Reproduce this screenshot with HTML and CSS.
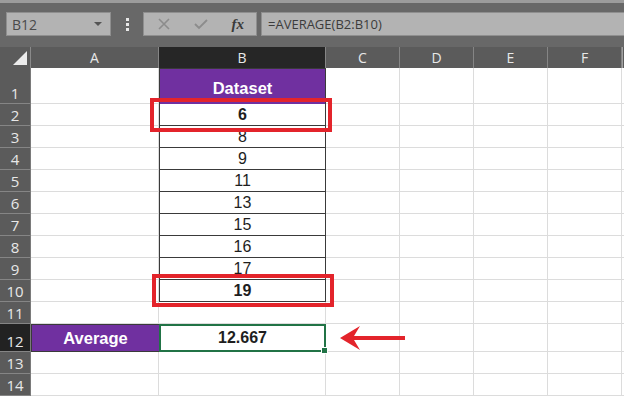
FILE: index.html
```html
<!DOCTYPE html>
<html lang="en">
<head>
    <meta charset="UTF-8">
    <title>Average - Excel</title>
    <link rel="stylesheet" href="styles.css">
</head>
<body>
    <div class="toolbar">
        <div class="namebox">
            <span>B12</span>
            <span class="caret"></span>
        </div>
        <div class="dots"><i></i><i></i><i></i></div>
        <div class="fbtns">
            <svg width="14" height="14" viewBox="0 0 14 14"><path d="M2 2 L12 12 M12 2 L2 12" stroke="#8c8c8c" stroke-width="1.6" fill="none"/></svg>
            <svg width="16" height="14" viewBox="0 0 16 14"><path d="M2 7 L6 11 L14 3" stroke="#8c8c8c" stroke-width="1.8" fill="none"/></svg>
            <span class="fx">fx</span>
        </div>
        <div class="formula">=AVERAGE(B2:B10)</div>
    </div>

    <div class="sheet">
        <div class="grid">
            <div class="corner"><span class="tri"></span></div>
            <div class="ch">A</div>
            <div class="ch sel">B</div>
            <div class="ch">C</div>
            <div class="ch">D</div>
            <div class="ch">E</div>
            <div class="ch">F</div>
            <div class="ch end"></div>

            <div class="rh">1</div><div class="c"></div><div class="c head">Dataset</div><div class="c"></div><div class="c"></div><div class="c"></div><div class="c"></div><div class="c end"></div>
            <div class="rh">2</div><div class="c"></div><div class="c data bold">6</div><div class="c"></div><div class="c"></div><div class="c"></div><div class="c"></div><div class="c end"></div>
            <div class="rh">3</div><div class="c"></div><div class="c data">8</div><div class="c"></div><div class="c"></div><div class="c"></div><div class="c"></div><div class="c end"></div>
            <div class="rh">4</div><div class="c"></div><div class="c data">9</div><div class="c"></div><div class="c"></div><div class="c"></div><div class="c"></div><div class="c end"></div>
            <div class="rh">5</div><div class="c"></div><div class="c data">11</div><div class="c"></div><div class="c"></div><div class="c"></div><div class="c"></div><div class="c end"></div>
            <div class="rh">6</div><div class="c"></div><div class="c data">13</div><div class="c"></div><div class="c"></div><div class="c"></div><div class="c"></div><div class="c end"></div>
            <div class="rh">7</div><div class="c"></div><div class="c data">15</div><div class="c"></div><div class="c"></div><div class="c"></div><div class="c"></div><div class="c end"></div>
            <div class="rh">8</div><div class="c"></div><div class="c data">16</div><div class="c"></div><div class="c"></div><div class="c"></div><div class="c"></div><div class="c end"></div>
            <div class="rh">9</div><div class="c"></div><div class="c data">17</div><div class="c"></div><div class="c"></div><div class="c"></div><div class="c"></div><div class="c end"></div>
            <div class="rh">10</div><div class="c"></div><div class="c data bold">19</div><div class="c"></div><div class="c"></div><div class="c"></div><div class="c"></div><div class="c end"></div>
            <div class="rh">11</div><div class="c"></div><div class="c"></div><div class="c"></div><div class="c"></div><div class="c"></div><div class="c"></div><div class="c end"></div>
            <div class="rh sel">12</div><div class="c label">Average</div><div class="c active bold">12.667<span class="handle"></span></div><div class="c"></div><div class="c"></div><div class="c"></div><div class="c"></div><div class="c end"></div>
            <div class="rh">13</div><div class="c"></div><div class="c"></div><div class="c"></div><div class="c"></div><div class="c"></div><div class="c"></div><div class="c end"></div>
            <div class="rh">14</div><div class="c"></div><div class="c"></div><div class="c"></div><div class="c"></div><div class="c"></div><div class="c"></div><div class="c end"></div>
        </div>

        <div class="mark mark-top"></div>
        <div class="mark mark-bottom"></div>
        <svg class="arrow" width="70" height="28" viewBox="0 0 70 28">
            <path d="M2 14 L22 2 L16 12 L67 12 L67 16 L16 16 L22 26 Z" fill="#e3242b"/>
        </svg>
    </div>
</body>
</html>
```

FILE: styles.css
```css
body {
    margin: 0;
    background: #5e5e5e;
    font-family: "Open Sans", "Noto Sans", sans-serif;
    overflow: hidden;
}
.toolbar {
    height: 47px;
    box-sizing: border-box;
    padding: 9px 0 0 6px;
    display: flex;
    align-items: flex-start;
    background: #686868;
    border-top: 3px solid #9c9c9c;
}
.namebox {
    width: 105px;
    height: 24px;
    box-sizing: border-box;
    background: #b3b3b3;
    border: 1px solid #8f8f8f;
    display: flex;
    align-items: center;
    justify-content: space-between;
    padding: 0 8px 0 5px;
    font-size: 14px;
    color: #4a4a4a;
}
.caret {
    width: 0;
    height: 0;
    border-left: 4px solid transparent;
    border-right: 4px solid transparent;
    border-top: 4px solid #555;
}
.dots {
    width: 32px;
    height: 24px;
    display: flex;
    flex-direction: column;
    align-items: center;
    justify-content: center;
    gap: 2px;
}
.dots i {
    width: 3px;
    height: 3px;
    background: #e8e8e8;
}
.fbtns {
    width: 114px;
    height: 24px;
    box-sizing: border-box;
    background: #b3b3b3;
    border: 1px solid #8f8f8f;
    display: flex;
    align-items: center;
    padding: 0 12px 0 13px;
    justify-content: space-between;
}
.fx {
    font-family: "Liberation Serif", serif;
    font-style: italic;
    font-weight: bold;
    font-size: 15px;
    color: #3a3a3a;
}
.formula {
    flex: 1;
    margin-left: 4px;
    height: 24px;
    box-sizing: border-box;
    background: #b3b3b3;
    border: 1px solid #8f8f8f;
    border-right: none;
    padding-left: 6px;
    font-size: 13px;
    line-height: 22px;
    color: #3c3c3c;
}
.sheet {
    position: relative;
}
.grid {
    display: grid;
    grid-template-columns: 31px 128px 167px 74px 74px 74px 74px 2px;
    grid-template-rows: 21px 36px repeat(10, 22px) 28px 22px 22px;
    background: #fff;
}
.grid > div {
    box-sizing: border-box;
}
.corner {
    background: #5b5b5b;
    border-right: 1px solid #8a8a8a;
    position: relative;
}
.tri {
    position: absolute;
    right: 3px;
    bottom: 3px;
    width: 0;
    height: 0;
    border-left: 14px solid transparent;
    border-bottom: 14px solid #ececec;
}
.ch {
    background: #5b5b5b;
    border-right: 1px solid #858585;
    color: #e8e8e8;
    font-size: 14px;
    display: flex;
    align-items: center;
    justify-content: center;
}
.ch.sel {
    background: #262626;
}
.ch.end {
    border-right: none;
    border-left: 1px solid #a0a0a0;
}
.rh {
    background: #5b5b5b;
    border-bottom: 1px solid #858585;
    border-right: 1px solid #7a7a7a;
    color: #e8e8e8;
    font-size: 15px;
    display: flex;
    align-items: flex-end;
    justify-content: center;
    line-height: 20px;
}
.rh.sel {
    background: #222;
}
.c {
    border-right: 1px solid #dcdcdc;
    border-bottom: 1px solid #dcdcdc;
    display: flex;
    align-items: flex-end;
    justify-content: center;
    font-family: "Liberation Sans", Arial, sans-serif;
    font-size: 16px;
    line-height: 20px;
    color: #1e1e1e;
}
.c.end {
    background: #fff;
    border-right: none;
}
.head {
    background: #7030a0;
    color: #fff;
    font-weight: bold;
    font-size: 16.5px;
    align-items: center;
    padding-top: 2px;
    border: 1px solid #3a3a3a;
    border-bottom: none;
}
.data {
    border: 1px solid #3a3a3a;
    border-top: none;
}
.bold {
    font-weight: bold;
}
.label {
    background: #7030a0;
    color: #fff;
    font-weight: bold;
    font-size: 16.5px;
    align-items: center;
    border: 1px solid #3a3a3a;
    border-right: none;
}
.active {
    border: 2px solid #217346;
    align-items: center;
    position: relative;
}
.handle {
    position: absolute;
    right: -4px;
    bottom: -4px;
    width: 5px;
    height: 5px;
    background: #217346;
    border: 1px solid #fff;
}
.mark {
    position: absolute;
    border: 4px solid #e3242b;
    box-sizing: border-box;
}
.mark-top {
    left: 150px;
    top: 51px;
    width: 182px;
    height: 34px;
}
.mark-bottom {
    left: 152px;
    top: 227px;
    width: 182px;
    height: 33px;
}
.arrow {
    position: absolute;
    left: 338px;
    top: 277px;
}
```
